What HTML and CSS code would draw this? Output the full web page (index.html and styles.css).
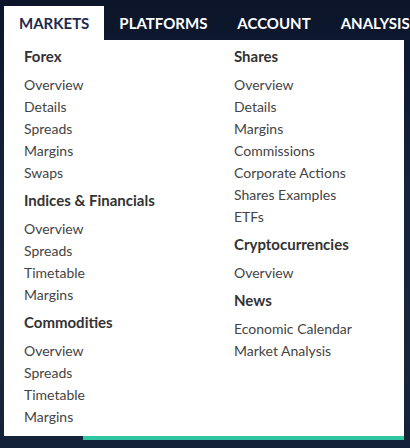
FILE: index.html
```html
<!DOCTYPE html>
<html>
<head>
<meta charset="utf-8">
<link rel="stylesheet" href="styles.css">
</head>
<body>
<div class="page">
  <nav class="nav">
    <a class="nav-item active">MARKETS</a>
    <a class="nav-item">PLATFORMS</a>
    <a class="nav-item">ACCOUNT</a>
    <a class="nav-item">ANALYSIS</a>
  </nav>
  <div class="panel">
    <div class="col">
      <div class="group">
        <div class="heading">Forex</div>
        <div class="link">Overview</div>
        <div class="link">Details</div>
        <div class="link">Spreads</div>
        <div class="link">Margins</div>
        <div class="link">Swaps</div>
      </div>
      <div class="group">
        <div class="heading">Indices &amp; Financials</div>
        <div class="link">Overview</div>
        <div class="link">Spreads</div>
        <div class="link">Timetable</div>
        <div class="link">Margins</div>
      </div>
      <div class="group">
        <div class="heading">Commodities</div>
        <div class="link">Overview</div>
        <div class="link">Spreads</div>
        <div class="link">Timetable</div>
        <div class="link">Margins</div>
      </div>
    </div>
    <div class="col">
      <div class="group">
        <div class="heading">Shares</div>
        <div class="link">Overview</div>
        <div class="link">Details</div>
        <div class="link">Margins</div>
        <div class="link">Commissions</div>
        <div class="link">Corporate Actions</div>
        <div class="link">Shares Examples</div>
        <div class="link">ETFs</div>
      </div>
      <div class="group">
        <div class="heading">Cryptocurrencies</div>
        <div class="link">Overview</div>
      </div>
      <div class="group">
        <div class="heading">News</div>
        <div class="link">Economic Calendar</div>
        <div class="link">Market Analysis</div>
      </div>
    </div>
  </div>
  <div class="teal"></div>
</div>
</body>
</html>
```
FILE: styles.css
```css
html, body {
  margin: 0;
  padding: 0;
}
body {
  width: 410px;
  height: 448px;
  overflow: hidden;
  background: linear-gradient(180deg, #0c1529 0%, #14223d 40%, #1a2537 80%, #13213a 100%);
  font-family: Lato, "Open Sans", sans-serif;
}
.page {
  padding: 6px 0 0 4px;
}
.nav {
  display: flex;
  height: 34px;
  white-space: nowrap;
}
.nav-item {
  display: flex;
  align-items: center;
  padding: 0 15px;
  color: #ffffff;
  font-weight: 700;
  font-size: 15px;
}
.nav-item.active {
  background: #ffffff;
  color: #1d2b4c;
}
.panel {
  width: 400px;
  height: 396px;
  box-sizing: border-box;
  background: #ffffff;
  display: flex;
  padding: 4px 0 0 20px;
}
.col {
  width: 210px;
  flex-shrink: 0;
}
.col + .col {
  flex: 1;
}
.group + .group {
  margin-top: 4px;
}
.heading {
  font-weight: 700;
  font-size: 15px;
  line-height: 24px;
  color: #333333;
  margin-bottom: 6px;
}
.link {
  font-size: 14px;
  line-height: 22px;
  color: #444444;
}
.teal {
  margin-left: 79px;
  width: 321px;
  height: 4px;
  background: #2fc6a2;
}
```
